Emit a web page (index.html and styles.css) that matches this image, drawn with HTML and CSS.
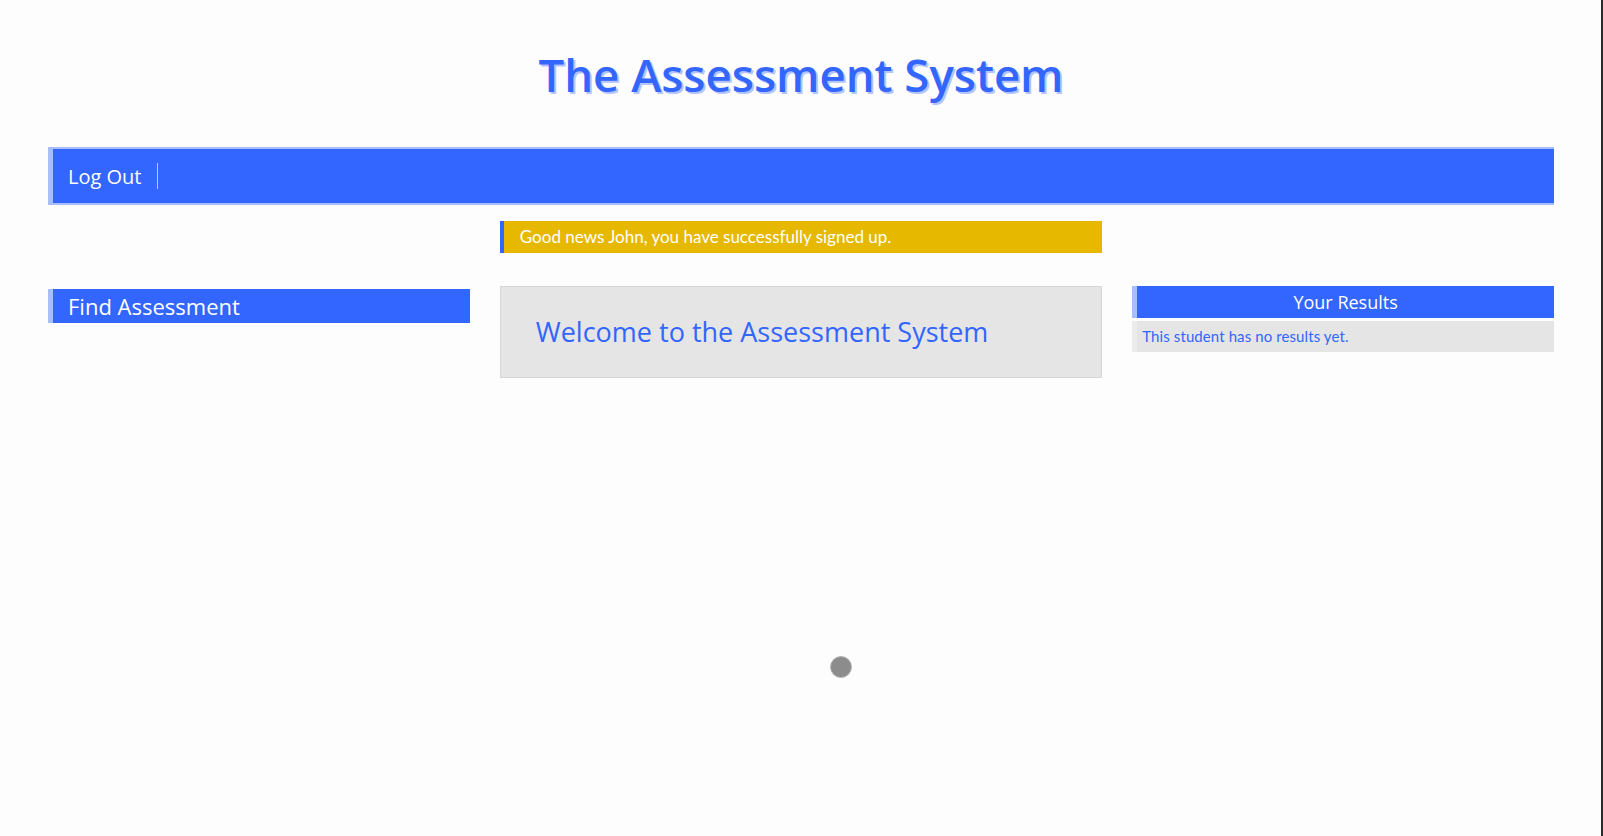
FILE: index.html
```html
<!DOCTYPE html>
<html lang="en">
<head>
<meta charset="utf-8">
<title>The Assessment System</title>
<link rel="stylesheet" href="styles.css">
</head>
<body>
<div class="page">
  <header class="site-header">
    <h1 class="site-title">The Assessment System</h1>
  </header>
  <nav class="main-nav">
    <a class="nav-link" href="#">Log Out</a>
    <span class="nav-sep"></span>
  </nav>
  <div class="alert-wrap">
    <div class="alert">Good news John, you have successfully signed up.</div>
  </div>
  <main class="columns">
    <aside class="col-left">
      <div class="panel-title">Find Assessment</div>
    </aside>
    <section class="col-main">
      <div class="welcome">
        <h2 class="welcome-title">Welcome to the Assessment System</h2>
      </div>
    </section>
    <aside class="col-right">
      <div class="results-title">Your Results</div>
      <div class="results-body">This student has no results yet.</div>
    </aside>
  </main>
</div>
<div class="loader"></div>
</body>
</html>
```
FILE: styles.css
```css
html {
  background: #fdfdfd;
}
body {
  margin: 0;
  min-height: 836px;
  box-sizing: border-box;
  border-right: 2px solid #2b2b2b;
  background: #fdfdfd;
  font-family: "Open Sans", "Noto Sans", sans-serif;
  position: relative;
}
.page {
  padding: 0 47px 0 48px;
}
.site-header {
  display: flex;
  justify-content: center;
  padding-top: 44px;
  height: 147px;
  box-sizing: border-box;
}
.site-title {
  margin: 0;
  font-family: "Open Sans", sans-serif;
  font-weight: 600;
  font-size: 45.5px;
  line-height: 60px;
  color: #3366ff;
  text-shadow: 2px 2px 0 #b4c4fa;
  letter-spacing: 0;
}
.main-nav {
  display: flex;
  align-items: center;
  height: 54px;
  background: #3366ff;
  border-top: 2px solid #a8bdfb;
  border-bottom: 2px solid #a8bdfb;
  border-left: 5px solid #a8bdfb;
  padding-left: 15px;
}
.nav-link {
  color: #ffffff;
  text-decoration: none;
  font-size: 20px;
  padding-right: 16px;
}
.nav-sep {
  width: 1px;
  height: 26px;
  background: #b9c9fb;
}
.alert-wrap {
  display: flex;
  justify-content: center;
  margin-top: 16px;
}
.alert {
  width: 40%;
  box-sizing: border-box;
  height: 32px;
  background: #e6b800;
  border-left: 4px solid #3366ff;
  color: #ffffff;
  font-family: "Lato", sans-serif;
  font-size: 17px;
  letter-spacing: 0;
  line-height: 32px;
  padding-left: 16px;
}
.columns {
  display: grid;
  grid-template-columns: 28% 40% 28%;
  column-gap: 2%;
  margin-top: 33px;
  align-items: start;
}
.panel-title {
  margin-top: 3px;
  height: 34px;
  background: #3366ff;
  border-left: 5px solid #a8bdfb;
  color: #ffffff;
  font-size: 22px;
  line-height: 34px;
  padding-left: 15px;
}
.welcome {
  height: 92px;
  box-sizing: border-box;
  background: #e5e5e5;
  border: 1px solid #d6d6d6;
  padding-left: 35px;
  display: flex;
  align-items: center;
}
.welcome-title {
  margin: 0;
  font-weight: 500;
  font-size: 27px;
  color: #3366ff;
  padding-bottom: 2px;
}
.results-title {
  height: 32px;
  background: #3366ff;
  border-left: 5px solid #a8bdfb;
  color: #ffffff;
  text-align: center;
  font-size: 18px;
  line-height: 32px;
}
.results-body {
  margin-top: 3px;
  height: 31px;
  background: #e5e5e5;
  border-left: 5px solid #ececec;
  color: #3366ff;
  font-family: "Lato", sans-serif;
  font-size: 15px;
  letter-spacing: 0.1px;
  line-height: 31px;
  padding-left: 5px;
}
.loader {
  position: absolute;
  left: 830px;
  top: 656px;
  width: 20px;
  height: 20px;
  border-radius: 50%;
  background: #8c8c8c;
  border: 1px solid #b5b5b5;
}
```
